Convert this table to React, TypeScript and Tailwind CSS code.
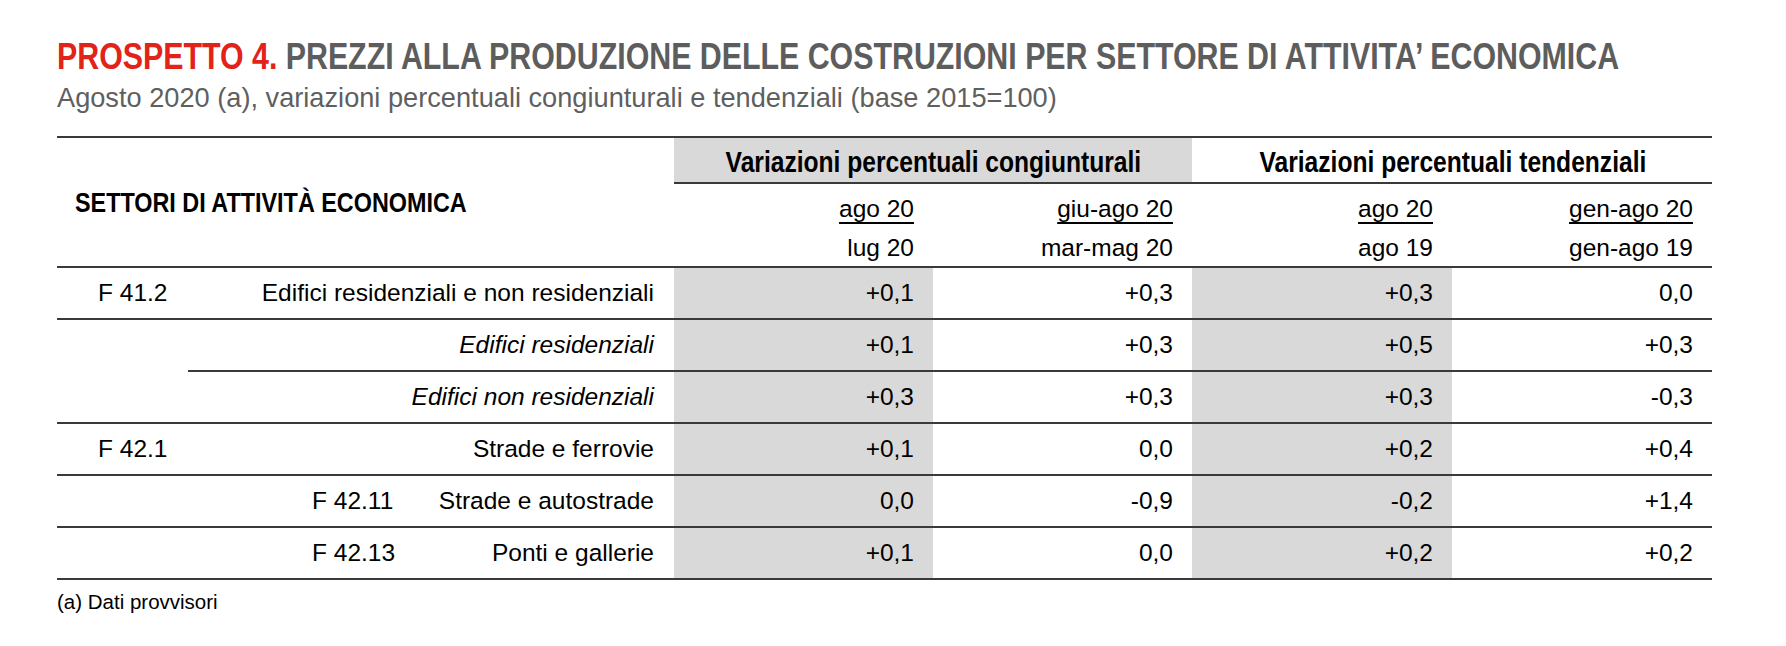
import React from "react";

const SANS = "font-['Liberation_Sans',Arial,sans-serif]";

type Row = {
  code?: string;
  codeInner?: boolean;
  label: string;
  italic?: boolean;
  noCodeBorder?: boolean;
  vals: string[];
};

const rows: Row[] = [
  { code: "F 41.2", label: "Edifici residenziali e non residenziali", vals: ["+0,1", "+0,3", "+0,3", "0,0"] },
  { label: "Edifici residenziali", italic: true, noCodeBorder: true, vals: ["+0,1", "+0,3", "+0,5", "+0,3"] },
  { label: "Edifici non residenziali", italic: true, vals: ["+0,3", "+0,3", "+0,3", "-0,3"] },
  { code: "F 42.1", label: "Strade e ferrovie", vals: ["+0,1", "0,0", "+0,2", "+0,4"] },
  { code: "F 42.11", codeInner: true, label: "Strade e autostrade", vals: ["0,0", "-0,9", "-0,2", "+1,4"] },
  { code: "F 42.13", codeInner: true, label: "Ponti e gallerie", vals: ["+0,1", "0,0", "+0,2", "+0,2"] },
];

const subHeads: [string, string][] = [
  ["ago 20", "lug 20"],
  ["giu-ago 20", "mar-mag 20"],
  ["ago 20", "ago 19"],
  ["gen-ago 20", "gen-ago 19"],
];

export default function App() {
  return (
    <div className={`w-[1786px] h-[646px] bg-white ${SANS} text-black overflow-hidden`}>
      <div className="pl-[57px] pt-[37px]">
        <div className="h-[40px] whitespace-nowrap">
          <span className="inline-block origin-left scale-x-[0.82] font-bold text-[37px] leading-[40px] text-[#5d5d5d]">
            <span className="text-[#e2231a]">PROSPETTO 4.</span> PREZZI ALLA PRODUZIONE DELLE COSTRUZIONI PER SETTORE DI ATTIVITA’ ECONOMICA
          </span>
        </div>
        <div className="mt-[5px] text-[27.2px] leading-[32px] text-[#5f5f5f] whitespace-nowrap">
          Agosto 2020 (a), variazioni percentuali congiunturali e tendenziali (base 2015=100)
        </div>

        {/* table */}
        <div className="mt-[22px] w-[1655px] border-t-2 border-[#3a3a3a]">
          {/* header */}
          <div className="flex border-b-2 border-[#3a3a3a]">
            <div className="w-[617px] h-[128px] flex items-center pl-[18px] whitespace-nowrap">
              <span className="inline-block origin-left scale-x-[0.82] font-bold text-[28.5px] leading-[34px]">
                SETTORI DI ATTIVITÀ ECONOMICA
              </span>
            </div>
            <div className="flex-1 flex flex-col">
              <div className="flex border-b-2 border-[#3a3a3a]">
                <div className="w-[518px] h-[44px] bg-[#d9d9d9] pt-[3px] text-center whitespace-nowrap">
                  <span className="inline-block origin-center scale-x-[0.82] font-bold text-[30px] leading-[41px]">
                    Variazioni percentuali congiunturali
                  </span>
                </div>
                <div className="flex-1 h-[44px] pt-[3px] text-center pl-[2px] whitespace-nowrap">
                  <span className="inline-block origin-center scale-x-[0.82] font-bold text-[30px] leading-[41px]">
                    Variazioni percentuali tendenziali
                  </span>
                </div>
              </div>
              <div className="flex h-[82px] pt-[5px]">
                {subHeads.map(([a, b], i) => (
                  <div key={i} className={`${i < 2 ? "w-[259px]" : "w-[260px]"} pr-[19px] text-right text-[24.5px] leading-[39px] whitespace-nowrap`}>
                    <div>
                      <span className="underline underline-offset-[5px] [text-decoration-thickness:1.5px] [text-decoration-skip-ink:none]">{a}</span>
                    </div>
                    <div>{b}</div>
                  </div>
                ))}
              </div>
            </div>
          </div>

          {/* body */}
          {rows.map((r, i) => (
            <div key={i} className="flex h-[52px] text-[24.5px] leading-[30px]">
              <div className={`w-[131px] flex items-center pl-[41px] whitespace-nowrap ${r.noCodeBorder ? "" : "border-b-2 border-[#3a3a3a]"}`}>
                {!r.codeInner && r.code}
              </div>
              <div className="w-[486px] flex items-center border-b-2 border-[#3a3a3a] pr-[20px] whitespace-nowrap">
                {r.codeInner && <span className="pl-[124px]">{r.code}</span>}
                <span className={`flex-1 text-right ${r.italic ? "italic" : ""}`}>{r.label}</span>
              </div>
              {r.vals.map((v, j) => (
                <div
                  key={j}
                  className={`${j < 2 ? "w-[259px]" : "w-[260px]"} flex items-center justify-end pr-[19px] border-b-2 border-[#3a3a3a] ${j % 2 === 0 ? "bg-[#d9d9d9]" : ""}`}
                >
                  {v}
                </div>
              ))}
            </div>
          ))}
        </div>

        <div className="mt-[10px] text-[20.5px] leading-[24px] whitespace-nowrap">(a) Dati provvisori</div>
      </div>
    </div>
  );
}
